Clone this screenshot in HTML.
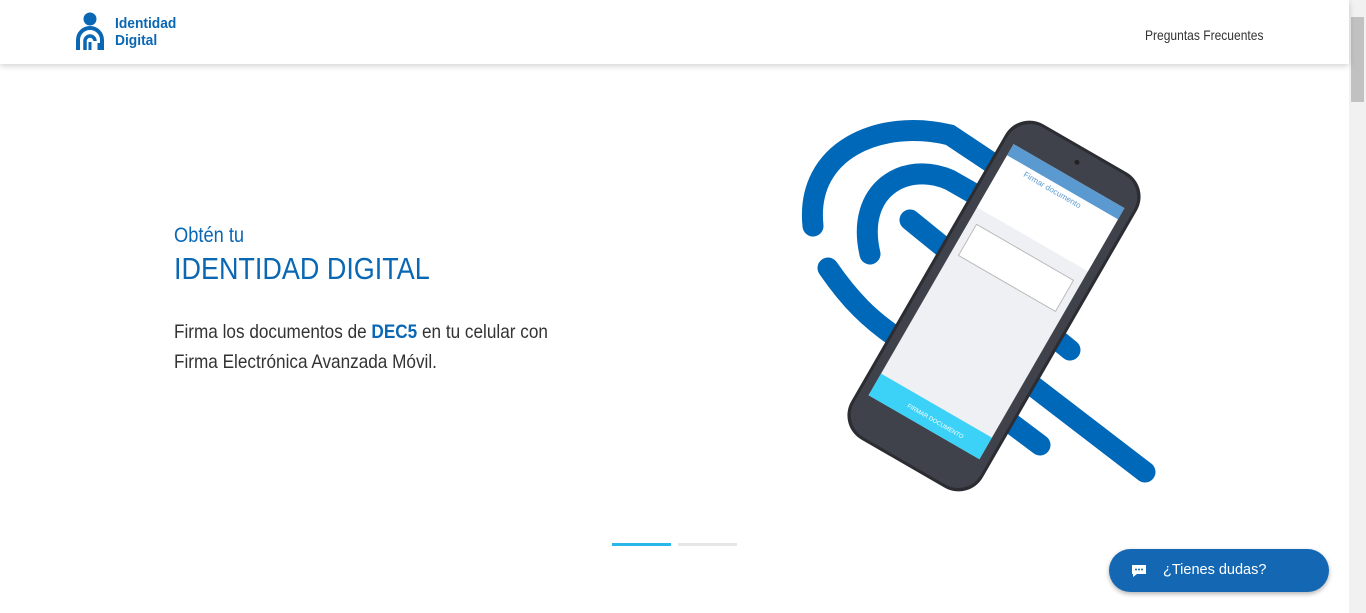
<!DOCTYPE html>
<html><head><meta charset="utf-8"><style>
*{margin:0;padding:0;box-sizing:border-box}
body{width:1366px;height:613px;overflow:hidden;background:#fff;font-family:"Liberation Sans",sans-serif;position:relative}
.hdr{position:absolute;left:0;top:0;width:1349px;height:64px;background:#fff;box-shadow:0 2px 6px rgba(0,0,0,.18);z-index:2}
.n{transform-origin:0 0;transform:scaleX(.87);white-space:nowrap}
.logo{position:absolute;left:115px;top:15px;color:#0a67b4;font-weight:bold;font-size:15px;line-height:17px}
.faq{position:absolute;left:1145px;top:27px;font-size:14px;color:#333}
.sb{position:absolute;right:0;top:0;width:17px;height:613px;background:#f1f1f1}
.sb .th{position:absolute;left:2px;top:17px;width:13px;height:85px;background:#c1c1c1}
.t1{position:absolute;left:174px;top:224px;font-size:21px;color:#0a67b4}
.t2{position:absolute;left:174px;top:251px;font-size:31px;color:#0a67b4}
.p{position:absolute;left:174px;top:317px;font-size:19.5px;color:#333;line-height:30px}
.p b{color:#0a67b4}
.chat{position:absolute;left:1109px;top:549px;width:220px;height:43px;border-radius:22px;background:#1467b3;box-shadow:0 2px 5px rgba(0,0,0,.3);color:#fff;font-size:14.5px}
</style></head><body>
<div class="hdr">
<svg style="position:absolute;left:74px;top:12px" width="32" height="40" viewBox="0 0 32 40">
<circle cx="16" cy="7" r="6.5" fill="#0a67b4"/>
<path d="M4 38V28a12 12 0 0 1 24 0v10" fill="none" stroke="#0a67b4" stroke-width="4"/>
<path d="M11 38v-9a5 5 0 0 1 10 0" fill="none" stroke="#0a67b4" stroke-width="3.5"/>
<path d="M16 30v8M25 31v7" stroke="#0a67b4" stroke-width="3"/>
</svg>
<div class="logo n" style="transform:scaleX(.92)">Identidad<br>Digital</div>
<div class="faq n" style="transform:scaleX(.86)">Preguntas Frecuentes</div>
</div>
<div class="sb"><div class="th"></div></div>
<div class="t1 n">Obtén tu</div>
<div class="t2 n">IDENTIDAD DIGITAL</div>
<div class="p n" style="transform:scaleX(.88)">Firma los documentos de <b>DEC5</b> en tu celular con<br>Firma Electrónica Avanzada Móvil.</div>
<svg style="position:absolute;left:0;top:0" width="1366" height="613">
<g fill="none" stroke="#0068b8" stroke-width="21" stroke-linecap="round">
<path d="M813,226 C805,150 880,118 950,135 L1010,175"/>
<path d="M870,254 C855,190 905,160 950,180 L985,200"/>
<path d="M910,220 L1070,350"/>
<path d="M828,268 C850,300 870,320 900,340 L1040,445"/>
<path d="M960,330 L1145,472"/>
<path d="M1085,255 L1095,262"/>
</g>
<g transform="translate(994,306) rotate(30)">
<rect x="-76" y="-182" width="152" height="364" rx="28" fill="#2b2d33"/>
<rect x="-73" y="-179" width="146" height="358" rx="26" fill="#3f424b"/>
<rect x="-64" y="-150" width="128" height="290" fill="#eef0f4"/>
<rect x="-64" y="-150" width="128" height="13" fill="#5b9ad0"/>
<rect x="-64" y="-137" width="128" height="60" fill="#fff"/>
<rect x="-56" y="-62" width="112" height="36" fill="#fff" stroke="#bbb"/>
<rect x="-64" y="115" width="128" height="25" fill="#3cd2f7"/>
<circle cx="0" cy="-166" r="2.5" fill="#222"/>
<text x="-40" y="-127" font-size="8" fill="#5b9ad0" font-family="Liberation Sans">Firmar documento</text>
<text x="-25" y="131" font-size="6" fill="#fff" font-family="Liberation Sans">FIRMAR DOCUMENTO</text>
</g>
<rect x="612" y="543" width="59" height="3" fill="#29b6e8"/>
<rect x="678" y="543" width="59" height="3" fill="#e6e6e6"/>
</svg>
<div class="chat">
<svg style="position:absolute;left:22px;top:15px" width="16" height="14" viewBox="0 0 16 14"><path d="M1 1h14v9H6l-4 3v-3H1z" fill="#fff"/><circle cx="5" cy="5.5" r="1" fill="#1467b3"/><circle cx="8" cy="5.5" r="1" fill="#1467b3"/><circle cx="11" cy="5.5" r="1" fill="#1467b3"/></svg>
<span style="position:absolute;left:54px;top:13px">¿Tienes dudas?</span>
</div>
</body></html>
